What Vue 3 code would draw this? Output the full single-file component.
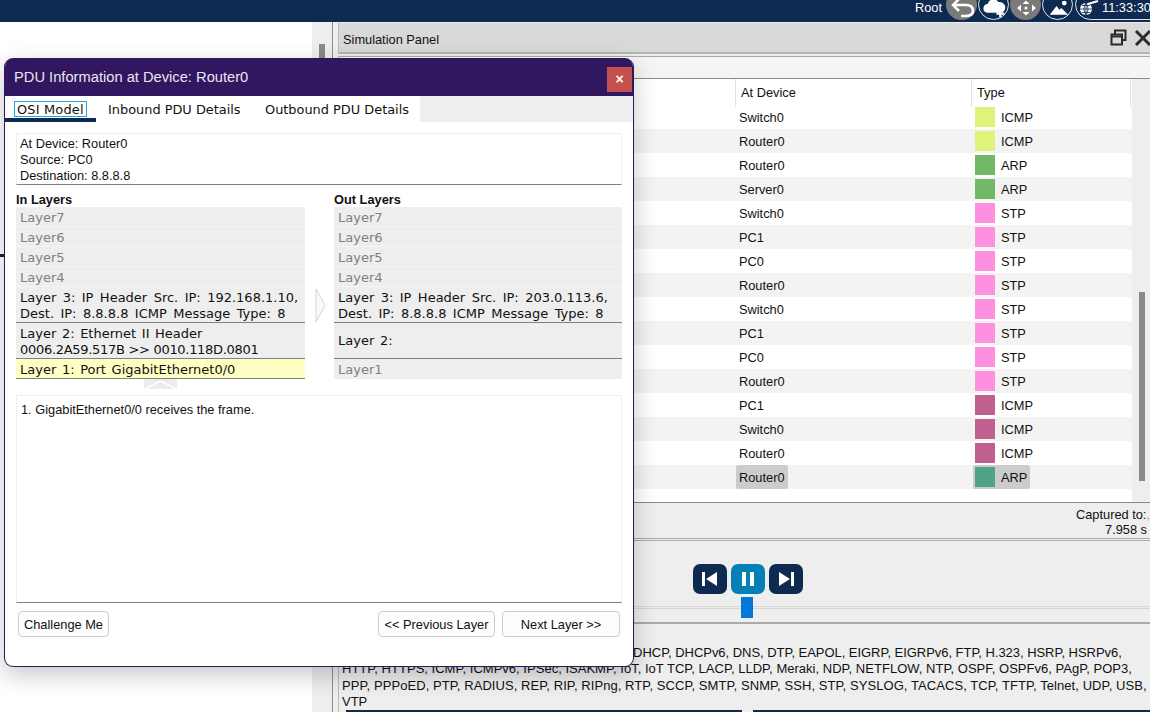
<template>
  <div class="app">
    <header class="topbar">
      <span class="user">Root</span>
      <span class="round grey">
        <svg width="30" height="30" viewBox="0 0 30 30" fill="none" stroke="#fff" stroke-width="2.6"><path d="M12 9l-6 6 6 6M6 15h13q7 0 7 6 0 5-8 5h-4" /></svg>
      </span>
      <span class="round line">
        <svg width="30" height="30" viewBox="0 0 30 30"><path d="M9 23a4.500 4.500 0 0 1 0-9a6 6 0 0 1 11-2a5.500 5.500 0 0 1 3 11z" fill="#fff" /><path d="M18 24h8M22 20v8" stroke="#fff" stroke-width="2.400" /></svg>
      </span>
      <span class="round grey">
        <svg width="30" height="30" viewBox="0 0 30 30" fill="#fff"><circle cx="15" cy="18" r="1.500" /><path d="M15 10.500l3.500 3.500h-7zM15 25.500l3.500-3.500h-7zM6 18l4-3.500v7zM25 18l-4-3.500v7z" /></svg>
      </span>
      <span class="round line">
        <svg width="30" height="30" viewBox="0 0 30 30" fill="#fff"><circle cx="22" cy="13" r="2.500" /><path d="M7 25l7-9 3 4 2-2 7 7z" /></svg>
      </span>
      <span class="clock">
        <svg width="22" height="20" viewBox="0 0 22 20" fill="none" stroke="#fff" stroke-width="1"><circle cx="8" cy="10" r="6" fill="#fff" stroke="none" /><path d="M2 10h12M8 4v12M4 6.500h8M4 13.500h8M8 4q-4 6 0 12M8 4q4 6 0 12" stroke="#0e2a50" stroke-width=".8" /><path d="M10 5l10-3" stroke="#fff" stroke-width="2" /></svg>
        <span>11:33:30</span>
      </span>
    </header>

    <main class="body">
      <section class="workspace">
        <div class="canvas"><i class="link"></i></div>
        <div class="vscroll"><i></i></div>
      </section>

      <section class="panel">
        <div class="panel-head">
          <span>Simulation Panel</span>
          <span class="head-icons">
            <svg width="17" height="17" viewBox="0 0 17 17" fill="none" stroke="#2b2b2b" stroke-width="2"><path d="M5 5V1.500h10.500V11H12" /><path d="M1.500 5.500H12V15.500H1.500z" /><path d="M1.500 7.500H12" /></svg>
            <svg width="17" height="17" viewBox="0 0 17 17" stroke="#2b2b2b" stroke-width="3"><path d="M2 2l14 14M16 2L2 16" /></svg>
          </span>
        </div>
        <div class="panel-sub"></div>

        <div class="events">
          <div class="table">
            <div class="thead">
              <span></span>
              <span class="th">At Device</span>
              <span class="th">Type</span>
            </div>
            <div v-for="(ev, i) in events" :key="i" class="row" :class="{ odd: i % 2 === 1, current: i === events.length - 1 }">
              <span></span>
              <span class="device"><b>{{ ev.device }}</b></span>
              <span class="type">
                <b><i class="swatch" :style="{ background: ev.color }"></i><span class="type-name">{{ ev.type }}</span></b>
              </span>
            </div>
          </div>
          <div class="table-scroll"><i></i></div>
        </div>

        <div class="captured">
          <div>Captured to:<em>,</em></div>
          <div>7.958 s</div>
        </div>

        <div class="controls">
          <button class="ctl">
            <svg width="20" height="20" viewBox="0 0 20 20" fill="#fff"><path d="M2 3h3v14H2zM17 3v14L6 10z" /></svg>
          </button>
          <button class="ctl active">
            <svg width="20" height="20" viewBox="0 0 20 20" fill="#fff"><path d="M4 3h4v14H4zM12 3h4v14h-4z" /></svg>
          </button>
          <button class="ctl">
            <svg width="20" height="20" viewBox="0 0 20 20" fill="#fff"><path d="M15 3h3v14h-3zM3 3v14l11-7z" /></svg>
          </button>
        </div>
        <div class="slider"><i class="knob"></i></div>

        <div class="filters">
          <div class="line-a">ACL Filter, ARP, BGP, Bluetooth, CAPWAP, CDP, DHCP, DHCPv6, DNS, DTP, EAPOL, EIGRP, EIGRPv6, FTP, H.323, HSRP, HSRPv6,</div>
          <div class="line-b">HTTP, HTTPS, ICMP, ICMPv6, IPSec, ISAKMP, IoT, IoT TCP, LACP, LLDP, Meraki, NDP, NETFLOW, NTP, OSPF, OSPFv6, PAgP, POP3,</div>
          <div class="line-c">PPP, PPPoED, PTP, RADIUS, REP, RIP, RIPng, RTP, SCCP, SMTP, SNMP, SSH, STP, SYSLOG, TACACS, TCP, TFTP, Telnet, UDP, USB,</div>
          <div>VTP</div>
        </div>
        <div class="bottom-edge"></div>
      </section>
    </main>

    <div class="dialog">
      <div class="dialog-title">
        <span>PDU Information at Device: Router0</span>
        <button class="close">×</button>
      </div>

      <div class="tabs">
        <div class="tab first"><span class="focus">OSI Model</span></div>
        <div class="tab second">Inbound PDU Details</div>
        <div class="tab third">Outbound PDU Details</div>
        <div class="tab-fill"></div>
      </div>

      <div class="dialog-body">
        <div class="info">
          <div>At Device: Router0</div>
          <div>Source: PC0</div>
          <div>Destination: 8.8.8.8</div>
        </div>

        <div class="layers">
          <div class="col">
            <div class="col-title">In Layers</div>
            <div v-for="l in inLayers" :key="l.text" class="layer" :class="l.cls">
              <div v-for="t in l.text.split('\n')" :key="t">{{ t }}</div>
            </div>
            <div class="up-arrow">
              <svg width="33" height="10" viewBox="0 0 33 10" fill="none" stroke="#fff" stroke-width="1.500"><path d="M1 10L16.500 2 32 10" /></svg>
            </div>
          </div>
          <div class="mid">
            <svg width="11" height="35" viewBox="0 0 11 35" fill="#fafafa" stroke="#d4d4d4"><path d="M1 1l9 16.500L1 34z" /></svg>
          </div>
          <div class="col">
            <div class="col-title">Out Layers</div>
            <div v-for="l in outLayers" :key="l.text" class="layer" :class="l.cls">
              <div v-for="t in l.text.split('\n')" :key="t">{{ t }}</div>
            </div>
          </div>
        </div>

        <div class="description">1. GigabitEthernet0/0 receives the frame.</div>

        <div class="actions">
          <button class="btn challenge">Challenge Me</button>
          <span class="spacer"></span>
          <button class="btn prev">&lt;&lt; Previous Layer</button>
          <button class="btn next">Next Layer &gt;&gt;</button>
        </div>
      </div>
    </div>
  </div>
</template>

<script setup>
const YELLOW = '#dff27a'
const GREEN = '#72b866'
const PINK = '#ff8fdf'
const ROSE = '#c0608e'
const TEAL = '#4fa488'

const events = [
  { device: 'Switch0', type: 'ICMP', color: YELLOW },
  { device: 'Router0', type: 'ICMP', color: YELLOW },
  { device: 'Router0', type: 'ARP', color: GREEN },
  { device: 'Server0', type: 'ARP', color: GREEN },
  { device: 'Switch0', type: 'STP', color: PINK },
  { device: 'PC1', type: 'STP', color: PINK },
  { device: 'PC0', type: 'STP', color: PINK },
  { device: 'Router0', type: 'STP', color: PINK },
  { device: 'Switch0', type: 'STP', color: PINK },
  { device: 'PC1', type: 'STP', color: PINK },
  { device: 'PC0', type: 'STP', color: PINK },
  { device: 'Router0', type: 'STP', color: PINK },
  { device: 'PC1', type: 'ICMP', color: ROSE },
  { device: 'Switch0', type: 'ICMP', color: ROSE },
  { device: 'Router0', type: 'ICMP', color: ROSE },
  { device: 'Router0', type: 'ARP', color: TEAL },
]

const inLayers = [
  { text: 'Layer7', cls: 'off' },
  { text: 'Layer6', cls: 'off' },
  { text: 'Layer5', cls: 'off' },
  { text: 'Layer4', cls: 'off' },
  { text: 'Layer 3: IP Header Src. IP: 192.168.1.10,\nDest. IP: 8.8.8.8 ICMP Message Type: 8', cls: 'tall wide' },
  { text: 'Layer 2: Ethernet II Header\n0006.2A59.517B >> 0010.118D.0801', cls: 'tall mac' },
  { text: 'Layer 1: Port GigabitEthernet0/0', cls: 'selected' },
]

const outLayers = [
  { text: 'Layer7', cls: 'off' },
  { text: 'Layer6', cls: 'off' },
  { text: 'Layer5', cls: 'off' },
  { text: 'Layer4', cls: 'off' },
  { text: 'Layer 3: IP Header Src. IP: 203.0.113.6,\nDest. IP: 8.8.8.8 ICMP Message Type: 8', cls: 'tall wide' },
  { text: 'Layer 2:', cls: 'tall center' },
  { text: 'Layer1', cls: 'off last' },
]
</script>

<style>
html, body {
  margin: 0;
  overflow: hidden;
}
</style>

<style scoped>
.app {
  position: relative;
  width: 1150px;
  height: 712px;
  overflow: hidden;
  display: flex;
  flex-direction: column;
  background: #fff;
  font-family: "Liberation Sans", Arial, sans-serif;
  font-size: 12.800px;
  color: #111;
}

.topbar {
  height: 22px;
  flex: none;
  background: #0e2a50;
  display: flex;
  justify-content: flex-end;
  overflow: hidden;
  color: #fff;
}
.user {
  line-height: 16px;
  margin-right: 4px;
}
.round {
  width: 31px;
  height: 31px;
  flex: none;
  box-sizing: border-box;
  margin: -11px 1px 0 0;
  border-radius: 50%;
  display: flex;
  align-items: center;
  justify-content: center;
}
.round.grey {
  background: #7a7a7a;
}
.round.line {
  border: 1px solid #dfe4ea;
}
.clock {
  width: 76px;
  height: 31px;
  flex: none;
  box-sizing: border-box;
  margin: -11px -1px 0 1px;
  border: 1px solid #dfe4ea;
  border-radius: 16px 0 0 16px;
  padding: 10px 0 0 2px;
  display: flex;
  line-height: 16px;
  white-space: nowrap;
}
.clock svg {
  margin-top: -1px;
  flex: none;
}
.clock span {
  margin-left: 2px;
}

.body {
  flex: 1;
  display: flex;
  min-height: 0;
}

.workspace {
  width: 333px;
  flex: none;
  box-sizing: border-box;
  display: flex;
  border-right: 1px solid #8a8f96;
}
.canvas {
  flex: 1;
  position: relative;
}
.link {
  position: absolute;
  left: 0;
  top: 232px;
  width: 6px;
  height: 3px;
  background: #222;
}
.vscroll {
  width: 20px;
  background: #eee;
  padding-top: 22px;
  box-sizing: border-box;
  display: flex;
  justify-content: center;
}
.vscroll i {
  width: 6px;
  height: 60px;
  background: #8a8a8a;
}

.panel {
  flex: 1;
  min-width: 0;
  position: relative;
  display: flex;
  flex-direction: column;
  background: #eee;
}

.panel-head {
  height: 31px;
  flex: none;
  box-sizing: border-box;
  margin: 1px 0 0 5px;
  background: #d9d9d9;
  border-left: 1px solid #bbb;
  border-bottom: 2px solid #b5b5b5;
  display: flex;
  align-items: center;
  justify-content: space-between;
  padding: 3px 0 0 4px;
}
.head-icons {
  display: flex;
  gap: 7px;
  margin: -3px -1px 0 0;
}
.panel-sub {
  height: 23px;
  flex: none;
  box-sizing: border-box;
  margin: 2px 0 0 5px;
  background: #f5f5f5;
  border-top: 1px solid #aaa;
  border-left: 1px solid #bbb;
  border-bottom: 1px solid #8a8a8a;
}

.events {
  height: 424px;
  flex: none;
  display: flex;
  margin-left: 5px;
  border-left: 1px solid #bbb;
  border-bottom: 1px solid #8a8a8a;
  box-sizing: border-box;
}
.table {
  flex: 1;
  min-width: 0;
  background: #fff;
}
.thead,
.row {
  display: grid;
  grid-template-columns: 396px 236px 160px;
}
.thead {
  height: 26px;
}
.th {
  border-left: 1px solid #e2e2e2;
  padding-left: 5px;
  line-height: 28px;
}
.th:last-child {
  border-right: 1px solid #e2e2e2;
}
.row {
  height: 24px;
  line-height: 26px;
}
.row.odd {
  background: #f3f3f3;
}
.device {
  padding-left: 4px;
}
.type {
  display: flex;
  padding-left: 2px;
  height: 24px;
}
.row b {
  font-weight: normal;
}
.type b {
  display: flex;
  align-items: center;
  padding: 0 3px 0 2px;
  border-radius: 2px;
}
.type-name {
  padding-top: 1px;
}
.swatch {
  width: 20px;
  height: 20px;
  margin-right: 6px;
}
.current .device b {
  display: inline-block;
  height: 24px;
  background: #ccc;
  margin-left: -3px;
  padding: 0 3px;
  border-radius: 2px;
}
.current .type b {
  background: #ccc;
}

.table-scroll {
  width: 18px;
  flex: none;
  background: #eee;
  padding: 213px 0 0 7px;
  box-sizing: border-box;
}
.table-scroll i {
  display: block;
  width: 6px;
  height: 189px;
  background: #8a8a8a;
}

.captured {
  height: 38px;
  flex: none;
  box-sizing: border-box;
  margin-left: 5px;
  padding: 4px 3px 0 0;
  border-left: 1px solid #bbb;
  border-bottom: 3px double #aaa;
  text-align: right;
  line-height: 15px;
}
.captured em {
  font-style: normal;
  color: #c98;
  margin-right: -3px;
}

.controls {
  height: 54px;
  flex: none;
  box-sizing: border-box;
  padding: 23px 0 0 360px;
  display: flex;
  gap: 4px;
}
.ctl {
  width: 34px;
  height: 30px;
  border: 0;
  border-radius: 7px;
  padding: 0;
  background: #0e2a50;
  display: flex;
  align-items: center;
  justify-content: center;
}
.ctl.active {
  background: #0580b4;
}

.slider {
  height: 29px;
  flex: none;
  box-sizing: border-box;
  position: relative;
  margin-left: 5px;
  border-left: 1px solid #bbb;
  border-bottom: 2px solid #aaa;
  background: linear-gradient(#eee 11px, #d6d6d6 11px, #d6d6d6 12px, #eee 12px, #eee 13px, #d6d6d6 13px, #d6d6d6 14px, #eee 14px);
}
.knob {
  position: absolute;
  left: 402px;
  top: 2px;
  width: 12px;
  height: 21px;
  background: #0478d7;
}

.filters {
  flex: 1;
  margin-left: 5px;
  padding: 21px 0 0 3px;
  border-left: 1px solid #bbb;
  font-size: 13px;
  line-height: 16.300px;
  white-space: nowrap;
  overflow: hidden;
}
.line-a {
  padding-left: 8px;
  letter-spacing: -0.04px;
}
.line-b {
  letter-spacing: 0.02px;
}
.line-c {
  letter-spacing: 0.07px;
}
.bottom-edge {
  position: absolute;
  left: 13px;
  right: 0;
  bottom: 0;
  height: 2px;
  background: linear-gradient(90deg, #0e2a50 396px, #eee 396px, #eee 407px, #0e2a50 407px);
}

.dialog {
  position: absolute;
  left: 4px;
  top: 58px;
  width: 630px;
  height: 609px;
  box-sizing: border-box;
  background: #fff;
  border: 1px solid #30175f;
  border-top: 0;
  border-radius: 9px;
  box-shadow: 0 8px 24px rgba(0, 0, 0, 0.22);
  display: flex;
  flex-direction: column;
  overflow: hidden;
}
.dialog-title {
  height: 38px;
  flex: none;
  background: #30175f;
  color: #e9e5f1;
  font-size: 14.700px;
  display: flex;
  justify-content: space-between;
  align-items: center;
  padding: 0 1px 0 9px;
}
.close {
  width: 25px;
  height: 25px;
  margin-top: 4px;
  border: 0;
  padding: 0;
  background: #c4504f;
  color: #fff;
  font: bold 14px "Liberation Sans", sans-serif;
}

.tabs {
  height: 26px;
  flex: none;
  display: flex;
  font-family: "DejaVu Sans", Verdana, sans-serif;
  font-size: 12.900px;
  line-height: 27px;
}
.tab {
  flex: none;
  box-sizing: border-box;
}
.tab.first {
  width: 91px;
  padding-left: 10px;
  border-bottom: 4px solid #0e2a50;
  line-height: 13px;
  padding-top: 6px;
}
.focus {
  display: inline-block;
  outline: 1px solid #1fa9d8;
  padding: 1px 2px 0;
  letter-spacing: 0.2px;
}
.tab.second {
  width: 157px;
  padding-left: 12px;
}
.tab.third {
  width: 167px;
  padding-left: 12px;
}
.tab-fill {
  flex: 1;
  background: #eee;
}

.dialog-body {
  flex: 1;
  display: flex;
  flex-direction: column;
  padding: 11px 11px 0;
  min-height: 0;
}

.info {
  height: 52px;
  flex: none;
  box-sizing: border-box;
  border: 1px solid #eee;
  border-bottom-color: #808080;
  padding: 2px 3px;
  line-height: 16px;
}

.layers {
  display: flex;
  height: 203px;
  flex: none;
  margin-top: 7px;
}
.col {
  position: relative;
}
.col:first-child {
  width: 289px;
}
.col:last-child {
  width: 288px;
}
.col-title {
  height: 15px;
  font-weight: bold;
  line-height: 15px;
}
.mid {
  width: 29px;
  box-sizing: border-box;
  padding: 96px 0 0 10px;
}
.layer {
  box-sizing: border-box;
  height: 20px;
  background: #eee;
  border-bottom: 1px solid #f5f5f5;
  padding: 0 4px;
  font-family: "DejaVu Sans", Verdana, sans-serif;
  font-size: 13px;
  word-spacing: 1.500px;
  line-height: 22px;
  white-space: nowrap;
}
.layer.off {
  color: #808080;
}
.layer.off.last {
  border-bottom-color: #eee;
}
.layer.tall {
  height: 36px;
  line-height: 16px;
  padding-top: 3px;
  border-bottom-color: #808080;
}
.layer.wide {
  word-spacing: 2.300px;
}
.layer.mac div:last-child {
  letter-spacing: -0.3px;
  word-spacing: 0;
}
.layer.center {
  line-height: 31px;
  padding-top: 2px;
}
.layer.selected {
  background: #ffffc4;
  border-bottom-color: #808080;
}
.up-arrow {
  position: absolute;
  left: 128px;
  top: 187px;
  width: 33px;
  height: 10px;
  background: #ececec;
  display: flex;
}

.description {
  height: 208px;
  flex: none;
  box-sizing: border-box;
  border: 1px solid #eee;
  border-bottom-color: #808080;
  padding: 6px 4px;
  line-height: 16px;
}

.actions {
  display: flex;
  gap: 7px;
  margin-top: 8px;
  padding: 0 2px;
}
.spacer {
  flex: 1;
}
.btn {
  height: 26px;
  box-sizing: border-box;
  border: 1px solid #ccc;
  border-radius: 4px;
  background: #fdfdfd;
  padding: 0;
  font-family: "Liberation Sans", Arial, sans-serif;
  font-size: 12.800px;
  color: #111;
}
.challenge {
  width: 91px;
}
.prev {
  width: 117px;
}
.next {
  width: 118px;
}
</style>
